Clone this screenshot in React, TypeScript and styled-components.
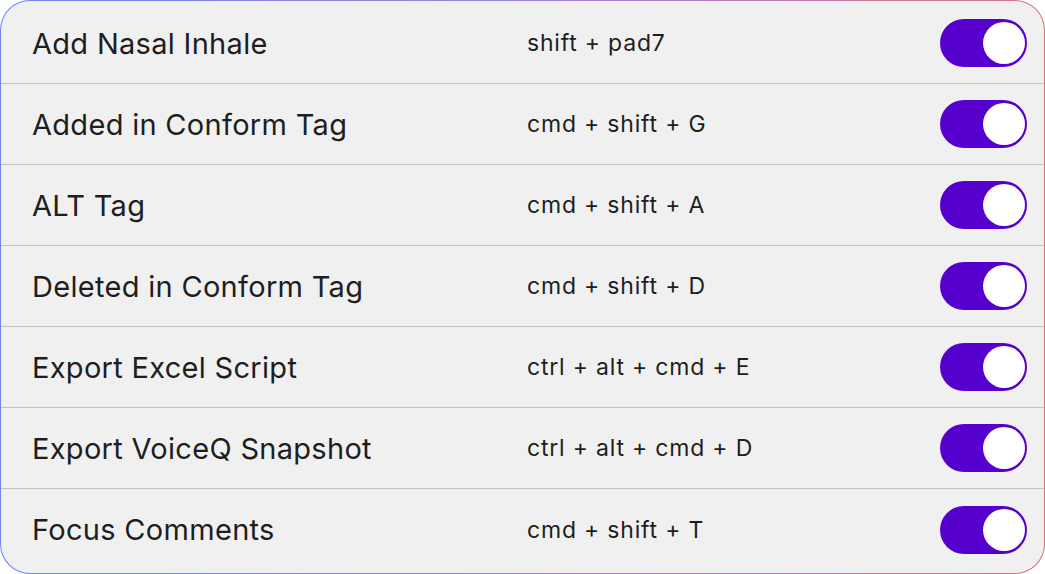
import React from "react";
import styled, { createGlobalStyle } from "styled-components";

const Global = createGlobalStyle`
  html, body { margin: 0; padding: 0; background: #ffffff; }
  body { font-family: Inter, "Liberation Sans", sans-serif; }
`;

const Panel = styled.div`
  box-sizing: border-box;
  width: 1045px;
  height: 574px;
  border: 1.5px solid transparent;
  border-radius: 30px;
  background:
    linear-gradient(#f0f0f0, #f0f0f0) padding-box,
    linear-gradient(90deg, #7084f6 0%, #a07fd0 55%, #d6717d 100%) border-box;
  padding-top: 2px;
  overflow: hidden;
  display: flex;
  flex-direction: column;
`;

const Row = styled.div<{ $last?: boolean }>`
  box-sizing: border-box;
  height: 81px;
  display: grid;
  grid-template-columns: 495px 1fr 87px;
  align-items: center;
  padding: 0 17px 0 31px;
  border-bottom: ${(p) => (p.$last ? "none" : "1.5px solid #c2c2c2")};
`;

const Name = styled.span`
  font-size: 29px;
  color: #1e1e1e;
  letter-spacing: 0.3px;
`;

const Keys = styled.span`
  font-size: 23px;
  color: #1e1e1e;
  letter-spacing: 0.8px;
`;

const Track = styled.div<{ $on: boolean }>`
  width: 87px;
  height: 48px;
  border-radius: 24px;
  background: ${(p) => (p.$on ? "#5500cc" : "#c8c8c8")};
  display: flex;
  align-items: center;
  justify-content: ${(p) => (p.$on ? "flex-end" : "flex-start")};
  padding: 0 2px;
  box-sizing: border-box;
`;

const Knob = styled.div`
  width: 42px;
  height: 42px;
  border-radius: 50%;
  background: #ffffff;
`;

const items = [
  ["Add Nasal Inhale", "shift + pad7"],
  ["Added in Conform Tag", "cmd + shift + G"],
  ["ALT Tag", "cmd + shift + A"],
  ["Deleted in Conform Tag", "cmd + shift + D"],
  ["Export Excel Script", "ctrl + alt + cmd + E"],
  ["Export VoiceQ Snapshot", "ctrl + alt + cmd + D"],
  ["Focus Comments", "cmd + shift + T"],
];

export default function App() {
  return (
    <>
      <Global />
      <Panel>
        {items.map(([n, k], i) => (
          <Row key={n} $last={i === items.length - 1}>
            <Name>{n}</Name>
            <Keys>{k}</Keys>
            <Track $on>
              <Knob />
            </Track>
          </Row>
        ))}
      </Panel>
    </>
  );
}
